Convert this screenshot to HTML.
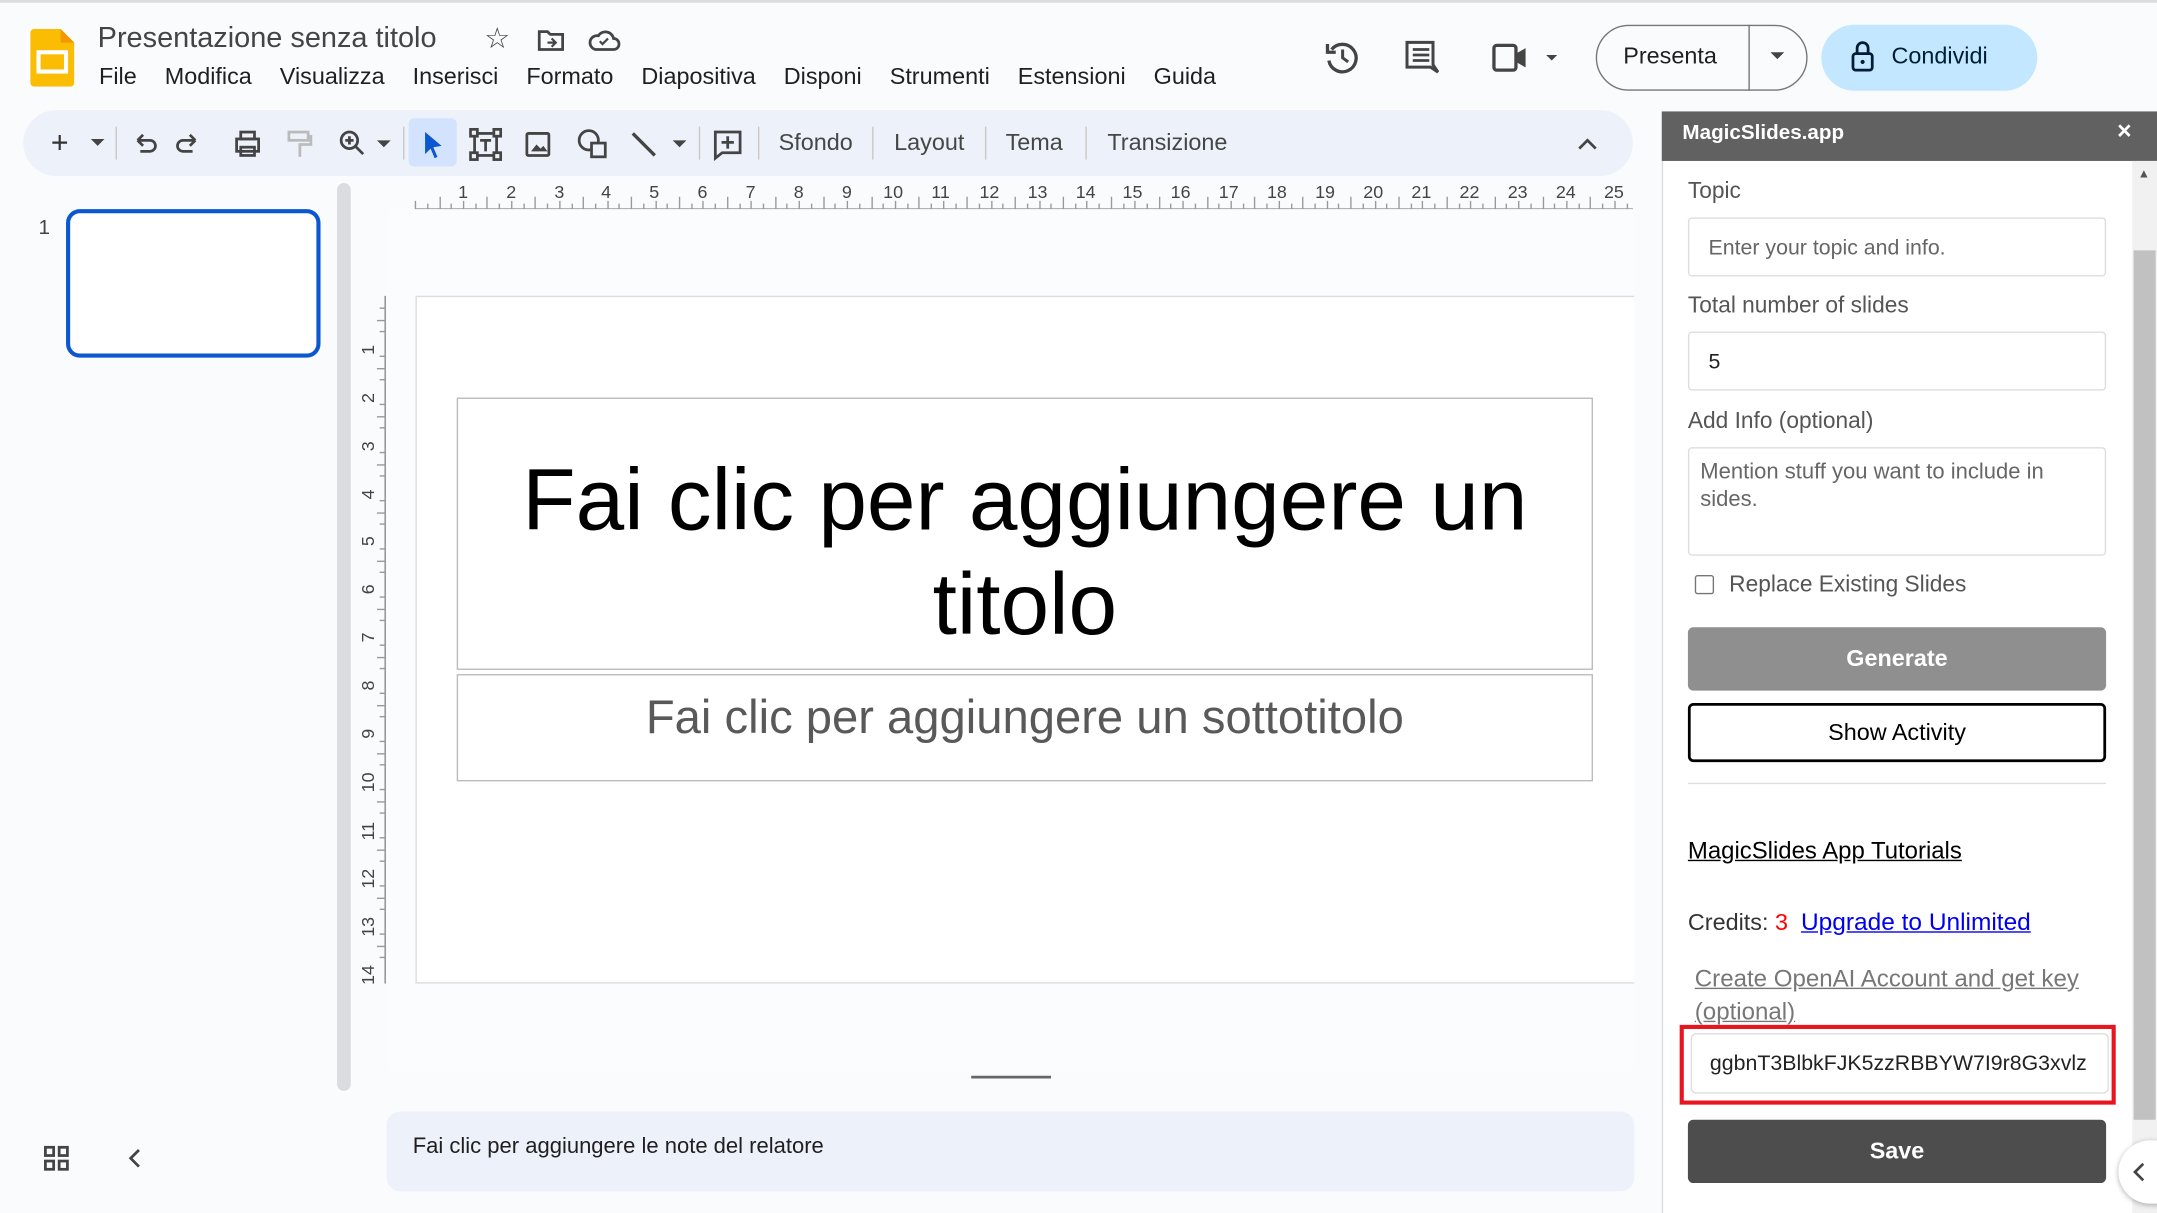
<!DOCTYPE html>
<html><head><meta charset="utf-8"><style>
*{box-sizing:border-box;margin:0;padding:0}
html,body{width:2157px;height:1213px;overflow:hidden;background:#f9fbfd}
#w{position:absolute;left:0;top:0;width:1568px;height:882px;transform:scale(1.37564);transform-origin:0 0;font-family:"Liberation Sans",Arial,sans-serif;color:#1f1f1f}
.a{position:absolute}
.menu span{margin-right:15.6px}
.tb{font-size:17px;color:#444746}
.sep{position:absolute;top:92px;width:1px;height:24px;background:#c7c7c7}
.lbl{position:absolute;left:1227px;font-size:16.5px;color:#555}
.inp{position:absolute;left:1227px;width:304px;background:#fff;border:1px solid #ddd;border-radius:3px;font-size:15.5px;color:#666;padding-left:14px}
</style></head><body><div id="w">
<div class="a" style="left:0;top:0;width:1568px;height:2px;background:#dadce0"></div>
<svg class="a" style="left:22px;top:21px" width="32" height="42" viewBox="0 0 32 42"><path d="M3 0h19l10 10v29a3 3 0 0 1-3 3H3a3 3 0 0 1-3-3V3a3 3 0 0 1 3-3z" fill="#fbbc04"/><path d="M22 0l10 10h-10z" fill="#f29900"/><rect x="6" y="17" width="20" height="14" fill="none" stroke="#fff" stroke-width="3"/></svg>
<div class="a" style="left:71px;top:16px;font-size:21px;color:#444">Presentazione senza titolo</div>
<div class="a" style="left:352px;top:16px;font-size:21px;color:#444">☆</div>
<svg class="a" style="left:390px;top:20px" width="22" height="18"><path d="M2 3h6l2 2h9v11H2z" fill="none" stroke="#444" stroke-width="2"/><path d="M8 11h6M11 8l3 3-3 3" stroke="#444" stroke-width="1.6" fill="none"/></svg>
<svg class="a" style="left:427px;top:20px" width="24" height="18"><path d="M6 16h13a4 4 0 0 0 0-8 6 6 0 0 0-11-2 5 5 0 0 0-2 10z" fill="none" stroke="#444" stroke-width="2"/><path d="M9 10l2 2 4-4" stroke="#444" stroke-width="1.6" fill="none"/></svg>
<div class="a menu" style="left:72px;top:46px;font-size:17px;color:#1f1f1f;white-space:nowrap"><span>File</span> <span>Modifica</span> <span>Visualizza</span> <span>Inserisci</span> <span>Formato</span> <span>Diapositiva</span> <span>Disponi</span> <span>Strumenti</span> <span>Estensioni</span> <span>Guida</span></div>
<svg class="a" style="left:962px;top:28px" width="28" height="28"><path d="M6 8a10 10 0 1 1-2 8" fill="none" stroke="#444" stroke-width="2.4"/><path d="M3 4v6h6" fill="none" stroke="#444" stroke-width="2.4"/><path d="M14 8v6l4 3" fill="none" stroke="#444" stroke-width="2.2"/></svg>
<svg class="a" style="left:1021px;top:29px" width="26" height="28"><path d="M2 2h21v18l4 6-6-4H2z" fill="none" stroke="#444" stroke-width="2.4" transform="scale(.9)"/><path d="M6 7h12M6 11h12M6 15h12" stroke="#444" stroke-width="2"/></svg>
<svg class="a" style="left:1084px;top:30px" width="50" height="24"><rect x="2" y="3" width="16" height="18" rx="2" fill="none" stroke="#444" stroke-width="2.4"/><path d="M18 9l7-4v14l-7-4z" fill="#444"/><path d="M40 10h8l-4 4z" fill="#444"/></svg>
<div class="a" style="left:1160px;top:18px;width:154px;height:48px;border:1px solid #747775;border-radius:24px"></div>
<div class="a" style="left:1271px;top:18px;width:1px;height:48px;background:#747775"></div>
<div class="a" style="left:1180px;top:31px;font-size:17px;color:#1f1f1f">Presenta</div>
<svg class="a" style="left:1286px;top:37px" width="12" height="8"><path d="M1 1h10L6 6z" fill="#444"/></svg>
<div class="a" style="left:1324px;top:18px;width:157px;height:48px;border-radius:24px;background:#c2e7ff"></div>
<svg class="a" style="left:1345px;top:29px" width="18" height="24"><rect x="2" y="10" width="14" height="12" rx="2" fill="none" stroke="#001d35" stroke-width="2"/><path d="M5 10V6a4 4 0 0 1 8 0v4" fill="none" stroke="#001d35" stroke-width="2"/><circle cx="9" cy="16" r="1.5" fill="#001d35"/></svg>
<div class="a" style="left:1375px;top:31px;font-size:17px;color:#001d35">Condividi</div>
<div class="a" style="left:17px;top:80px;width:1170px;height:48px;border-radius:24px;background:#edf2fa"></div>
<div class="a" style="left:297px;top:86px;width:35px;height:35px;border-radius:4px;background:#d3e3fd"></div>
<div class="a tb" style="left:37px;top:91px;font-size:22px;color:#333">+</div>
<svg class="a" style="left:66px;top:101px" width="10" height="6"><path d="M0 0h10L5 5z" fill="#444"/></svg>
<div class="sep" style="left:84px"></div>
<svg class="a" style="left:96px;top:94px" width="100" height="22" fill="none" stroke="#444" stroke-width="2"><path d="M4 8h9a4 4 0 0 1 0 8H6M4 8l4-4M4 8l4 4"/><path d="M56 8h-9a4 4 0 0 0 0 8h7M56 8l-4-4M56 8l-4 4" transform="translate(-10 0)"/><rect x="76" y="7" width="16" height="9"/><rect x="79" y="2" width="10" height="5"/><rect x="79" y="13" width="10" height="6"/></svg>
<svg class="a" style="left:208px;top:94px" width="20" height="22" fill="none" stroke="#bbb" stroke-width="2"><rect x="2" y="2" width="14" height="6"/><path d="M16 5h2v6H10v9"/></svg>
<svg class="a" style="left:246px;top:94px" width="40" height="22" fill="none" stroke="#444" stroke-width="2"><circle cx="8" cy="8" r="6"/><path d="M12 12l6 6M5 8h6M8 5v6"/><path d="M28 8h10l-5 5z" fill="#444" stroke="none"/></svg>
<div class="sep" style="left:293px"></div>
<svg class="a" style="left:306px;top:94px" width="18" height="22"><path d="M3 2l12 10-6 1 3 7-2 1-3-7-4 4z" fill="#0b57d0"/></svg>
<svg class="a" style="left:341px;top:93px" width="24" height="24" fill="none" stroke="#444" stroke-width="2"><rect x="4" y="4" width="16" height="16"/><rect x="1" y="1" width="5" height="5" fill="#edf2fa"/><rect x="18" y="1" width="5" height="5" fill="#edf2fa"/><rect x="1" y="18" width="5" height="5" fill="#edf2fa"/><rect x="18" y="18" width="5" height="5" fill="#edf2fa"/><path d="M8 9h8M12 9v8"/></svg>
<svg class="a" style="left:381px;top:95px" width="20" height="20" fill="none" stroke="#444" stroke-width="2"><rect x="2" y="2" width="16" height="16" rx="1"/><path d="M5 15l4-5 3 3 2-2 3 4z" fill="#444" stroke="none"/></svg>
<svg class="a" style="left:419px;top:93px" width="24" height="24" fill="none" stroke="#444" stroke-width="2"><circle cx="9" cy="9" r="7"/><rect x="11" y="11" width="10" height="10" fill="#edf2fa"/></svg>
<svg class="a" style="left:457px;top:94px" width="44" height="22" fill="none" stroke="#444" stroke-width="2.4"><path d="M3 3l16 16"/><path d="M32 8h10l-5 5z" fill="#444" stroke="none"/></svg>
<div class="sep" style="left:508px"></div>
<svg class="a" style="left:517px;top:93px" width="24" height="24" fill="none" stroke="#444" stroke-width="2"><path d="M3 3h18v15H8l-5 4z"/><path d="M12 6v9M7.5 10.5h9"/></svg>
<div class="sep" style="left:551px"></div>
<div class="a tb" style="left:566px;top:94px">Sfondo</div>
<div class="sep" style="left:634px"></div>
<div class="a tb" style="left:650px;top:94px">Layout</div>
<div class="sep" style="left:716px"></div>
<div class="a tb" style="left:731px;top:94px">Tema</div>
<div class="sep" style="left:789px"></div>
<div class="a tb" style="left:805px;top:94px">Transizione</div>
<svg class="a" style="left:1146px;top:99px" width="16" height="12"><path d="M2 9l6-6 6 6" fill="none" stroke="#444" stroke-width="2"/></svg>
<div class="a" style="left:28px;top:157px;font-size:15px;color:#444">1</div>
<div class="a" style="left:48px;top:152px;width:185px;height:108px;border:3px solid #0b57d0;border-radius:10px;background:#fff"></div>
<div class="a" style="left:245px;top:133px;width:10px;height:660px;border-radius:5px;background:#dadce0"></div>
<svg class="a" style="left:31px;top:832px" width="20" height="20" fill="none" stroke="#444" stroke-width="2"><rect x="2" y="2" width="6" height="6"/><rect x="12" y="2" width="6" height="6"/><rect x="2" y="12" width="6" height="6"/><rect x="12" y="12" width="6" height="6"/></svg>
<svg class="a" style="left:92px;top:834px" width="12" height="16"><path d="M9 2L3 8l6 6" fill="none" stroke="#444" stroke-width="2"/></svg>
<svg class="a" style="left:282px;top:128px" width="910" height="26" font-family="Liberation Sans" font-size="13" fill="#444">
<line x1="20" y1="24" x2="905" y2="24" stroke="#888"/>
<text x="51" y="16">1</text><text x="86" y="16">2</text><text x="121" y="16">3</text><text x="155" y="16">4</text><text x="190" y="16">5</text><text x="225" y="16">6</text><text x="260" y="16">7</text><text x="295" y="16">8</text><text x="330" y="16">9</text><text x="360" y="16">10</text><text x="395" y="16">11</text><text x="430" y="16">12</text><text x="465" y="16">13</text><text x="500" y="16">14</text><text x="534" y="16">15</text><text x="569" y="16">16</text><text x="604" y="16">17</text><text x="639" y="16">18</text><text x="674" y="16">19</text><text x="709" y="16">20</text><text x="744" y="16">21</text><text x="779" y="16">22</text><text x="814" y="16">23</text><text x="849" y="16">24</text><text x="884" y="16">25</text>
<path stroke="#999" d="M20 24v-6M29 24v-4M38 24v-9M46 24v-4M55 24v-6M64 24v-4M72 24v-9M81 24v-4M90 24v-6M99 24v-4M107 24v-9M116 24v-4M125 24v-6M134 24v-4M142 24v-9M151 24v-4M160 24v-6M168 24v-4M177 24v-9M186 24v-4M195 24v-6M203 24v-4M212 24v-9M221 24v-4M229 24v-6M238 24v-4M247 24v-9M256 24v-4M264 24v-6M273 24v-4M282 24v-9M290 24v-4M299 24v-6M308 24v-4M317 24v-9M325 24v-4M334 24v-6M343 24v-4M352 24v-9M360 24v-4M369 24v-6M378 24v-4M386 24v-9M395 24v-4M404 24v-6M413 24v-4M421 24v-9M430 24v-4M439 24v-6M447 24v-4M456 24v-9M465 24v-4M474 24v-6M482 24v-4M491 24v-9M500 24v-4M508 24v-6M517 24v-4M526 24v-9M535 24v-4M543 24v-6M552 24v-4M561 24v-9M569 24v-4M578 24v-6M587 24v-4M596 24v-9M604 24v-4M613 24v-6M622 24v-4M630 24v-9M639 24v-4M648 24v-6M657 24v-4M665 24v-9M674 24v-4M683 24v-6M691 24v-4M700 24v-9M709 24v-4M718 24v-6M726 24v-4M735 24v-9M744 24v-4M752 24v-6M761 24v-4M770 24v-9M779 24v-4M787 24v-6M796 24v-4M805 24v-9M813 24v-4M822 24v-6M831 24v-4M840 24v-9M848 24v-4M857 24v-6M866 24v-4M874 24v-9M883 24v-4M892 24v-6M901 24v-4"/>
</svg>
<svg class="a" style="left:258px;top:215px" width="24" height="500" font-family="Liberation Sans" font-size="13" fill="#444">
<line x1="22" y1="0" x2="22" y2="500" stroke="#888"/>
<path stroke="#999" d="M22 9h-4M22 18h-6M22 26h-4M22 44h-4M22 53h-6M22 61h-4M22 79h-4M22 88h-6M22 96h-4M22 114h-4M22 123h-6M22 131h-4M22 149h-4M22 158h-6M22 166h-4M22 184h-4M22 193h-6M22 201h-4M22 219h-4M22 228h-6M22 236h-4M22 254h-4M22 263h-6M22 271h-4M22 289h-4M22 298h-6M22 306h-4M22 324h-4M22 333h-6M22 341h-4M22 359h-4M22 368h-6M22 376h-4M22 394h-4M22 403h-6M22 411h-4M22 429h-4M22 438h-6M22 446h-4M22 464h-4M22 473h-6M22 481h-4"/>
<g transform="rotate(-90)"><text x="-43" y="14">1</text><text x="-78" y="14">2</text><text x="-113" y="14">3</text><text x="-148" y="14">4</text><text x="-182" y="14">5</text><text x="-217" y="14">6</text><text x="-252" y="14">7</text><text x="-287" y="14">8</text><text x="-322" y="14">9</text><text x="-361" y="14">10</text><text x="-396" y="14">11</text><text x="-431" y="14">12</text><text x="-466" y="14">13</text><text x="-501" y="14">14</text></g>
</svg>
<div class="a" style="left:282px;top:152px;width:905px;height:626px;background:#fbfcfd"></div>
<div class="a" style="left:302px;top:215px;width:886px;height:500px;background:#fff;border:1px solid #dadce0;border-right:none"></div>
<div class="a" style="left:332px;top:289px;width:826px;height:198px;border:1px solid #bbb;text-align:center;font-size:63.5px;line-height:76px;padding-top:36px;color:#000;white-space:nowrap">Fai clic per aggiungere un<br>titolo</div>
<div class="a" style="left:332px;top:490px;width:826px;height:78px;border:1px solid #bbb;text-align:center;font-size:34.3px;line-height:62px;color:#595959">Fai clic per aggiungere un sottotitolo</div>
<div class="a" style="left:706px;top:782px;width:58px;height:2px;background:#666"></div>
<div class="a" style="left:281px;top:808px;width:907px;height:58px;border-radius:10px;background:#edf2fa"></div>
<div class="a" style="left:300px;top:825px;font-size:16px;color:#1f1f1f">Fai clic per aggiungere le note del relatore</div>
<div class="a" style="left:1208px;top:81px;width:360px;height:801px;background:#fff;border-left:1px solid #dadce0"></div>
<div class="a" style="left:1208px;top:81px;width:360px;height:36px;background:#616161"></div>
<div class="a" style="left:1223px;top:88px;font-size:15px;font-weight:bold;color:#fff">MagicSlides.app</div>
<div class="a" style="left:1539px;top:85px;font-size:18px;font-weight:bold;color:#fff">×</div>
<div class="a" style="left:1550px;top:117px;width:18px;height:765px;background:#f1f1f1"></div>
<div class="a" style="left:1551px;top:182px;width:16px;height:632px;background:#c1c1c1"></div>
<div class="a" style="left:1554px;top:121px;font-size:9px;color:#555">▲</div>
<div class="lbl" style="top:130px">Topic</div>
<div class="inp" style="top:158px;height:43px;line-height:43px">Enter your topic and info.</div>
<div class="lbl" style="top:213px">Total number of slides</div>
<div class="inp" style="top:241px;height:43px;line-height:43px;color:#222">5</div>
<div class="lbl" style="top:297px">Add Info (optional)</div>
<div class="inp" style="top:325px;height:79px;padding:8px;line-height:20px;font-size:16px">Mention stuff you want to include in sides.</div>
<div class="a" style="left:1232px;top:418px;width:14px;height:14px;border:1px solid #767676;border-radius:2px;background:#fff"></div>
<div class="a" style="left:1257px;top:416px;font-size:16.5px;color:#555">Replace Existing Slides</div>
<div class="a" style="left:1227px;top:456px;width:304px;height:46px;border-radius:4px;background:#8f8f8f;color:#fff;font-size:17px;font-weight:bold;text-align:center;line-height:46px">Generate</div>
<div class="a" style="left:1227px;top:511px;width:304px;height:43px;border:2px solid #000;border-radius:4px;background:#fff;color:#000;font-size:17px;text-align:center;line-height:39px">Show Activity</div>
<div class="a" style="left:1227px;top:569px;width:304px;height:1px;background:#ddd"></div>
<div class="a" style="left:1227px;top:608px;font-size:17.4px;color:#000;text-decoration:underline">MagicSlides App Tutorials</div>
<div class="a" style="left:1227px;top:660px;font-size:17px;color:#333">Credits: <span style="color:#f00">3</span>&nbsp;&nbsp;<span style="color:#00e;text-decoration:underline;font-size:17.8px">Upgrade to Unlimited</span></div>
<div class="a" style="left:1232px;top:699px;width:300px;font-size:17.5px;line-height:24px;color:#777;text-decoration:underline">Create OpenAI Account and get key (optional)</div>
<div class="a" style="left:1221px;top:745px;width:317px;height:58px;border:3px solid #e8141e"></div>
<div class="a" style="left:1229px;top:751px;width:304px;height:44px;border:1px solid #ddd;border-radius:4px;background:#fff;font-size:15.5px;color:#222;line-height:44px;padding-left:13px;white-space:nowrap;overflow:hidden">ggbnT3BlbkFJK5zzRBBYW7I9r8G3xvlz</div>
<div class="a" style="left:1227px;top:814px;width:304px;height:46px;border-radius:4px;background:#4d4d4d;color:#fff;font-size:17px;font-weight:bold;text-align:center;line-height:46px">Save</div>
<div class="a" style="left:1540px;top:829px;width:50px;height:46px;border-radius:23px;background:#fff;box-shadow:0 1px 4px rgba(0,0,0,.3)"></div>
<svg class="a" style="left:1549px;top:845px" width="12" height="14"><path d="M9 1L3 7l6 6" fill="none" stroke="#444" stroke-width="2"/></svg>
</div></body></html>
